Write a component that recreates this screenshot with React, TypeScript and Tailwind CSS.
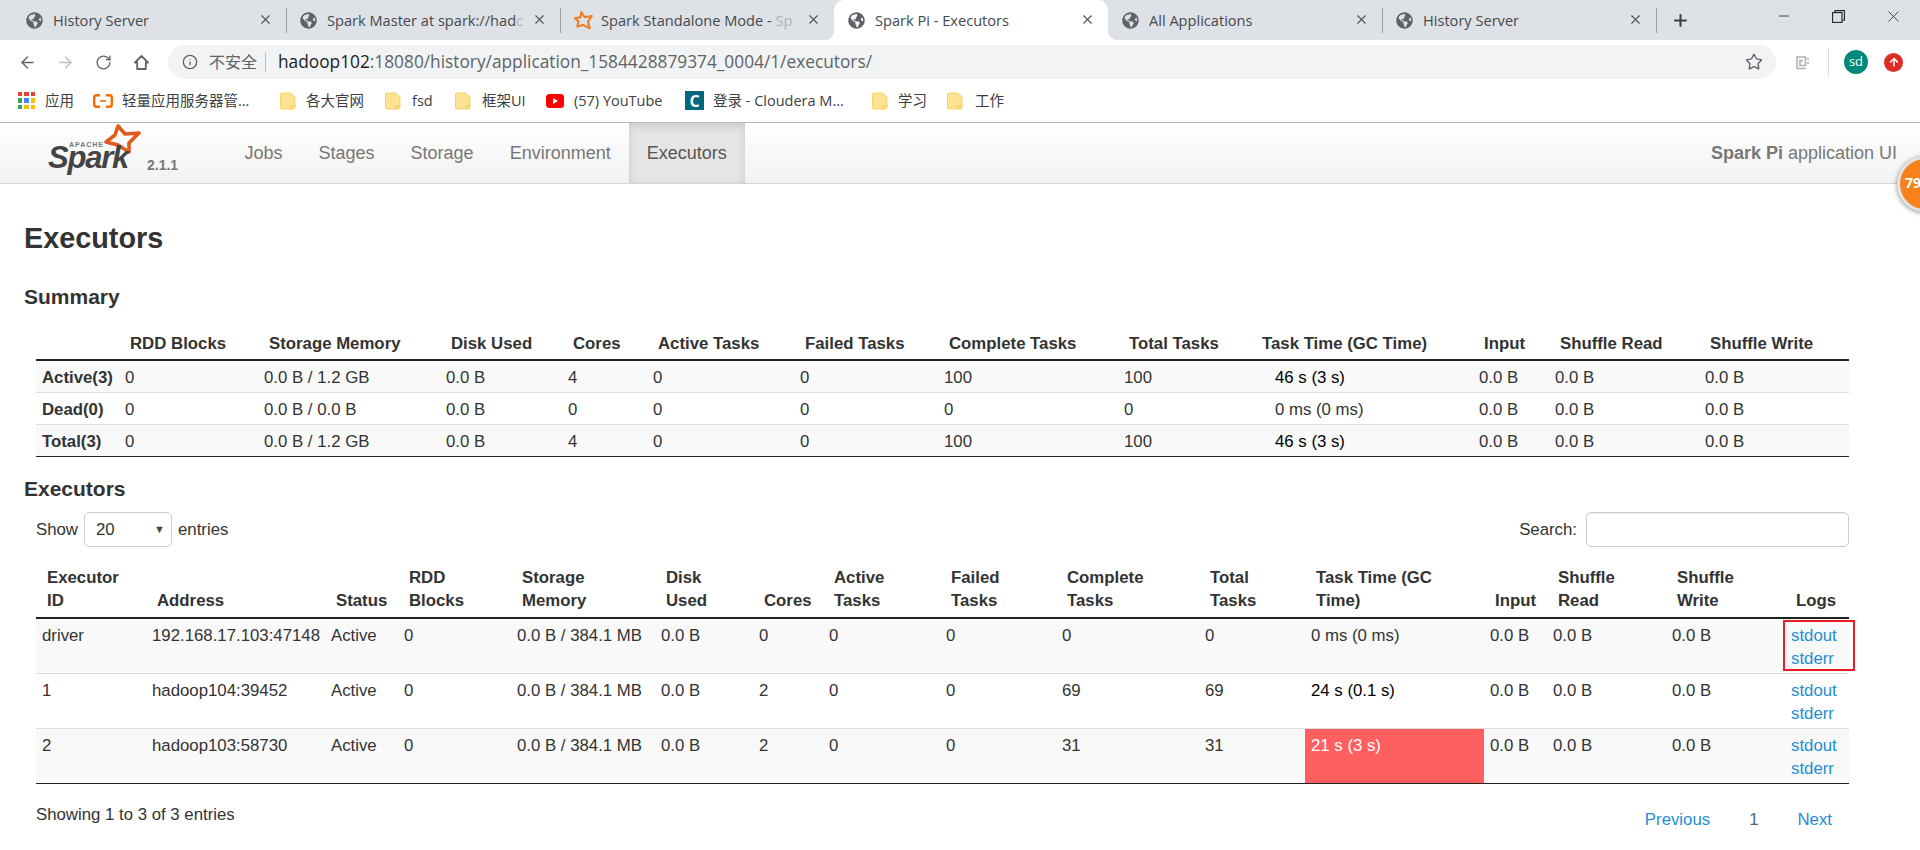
import { ArrowLeft, ArrowRight, RotateCw, Info, Star, X, Plus, Minus } from "lucide-react";
import { FaGlobeAmericas, FaArrowUp } from "react-icons/fa";

const tabs = [
  { title: "History Server", icon: "globe", sep: true },
  { title: "Spark Master at spark://had", fade: "c", icon: "globe", sep: true },
  { title: "Spark Standalone Mode - ", fade: "Sp", icon: "star" },
  { title: "Spark Pi - Executors", icon: "globe", active: true },
  { title: "All Applications", icon: "globe", sep: true },
  { title: "History Server", icon: "globe", sep: true },
];

const summaryRows = [
  ["Active(3)", "0", "0.0 B / 1.2 GB", "0.0 B", "4", "0", "0", "100", "100", "46 s (3 s)", "0.0 B", "0.0 B", "0.0 B"],
  ["Dead(0)", "0", "0.0 B / 0.0 B", "0.0 B", "0", "0", "0", "0", "0", "0 ms (0 ms)", "0.0 B", "0.0 B", "0.0 B"],
  ["Total(3)", "0", "0.0 B / 1.2 GB", "0.0 B", "4", "0", "0", "100", "100", "46 s (3 s)", "0.0 B", "0.0 B", "0.0 B"],
];

const summaryHead = ["", "RDD Blocks", "Storage Memory", "Disk Used", "Cores", "Active Tasks", "Failed Tasks", "Complete Tasks", "Total Tasks", "Task Time (GC Time)", "Input", "Shuffle Read", "Shuffle Write"];

const execHead = ["Executor ID", "Address", "Status", "RDD Blocks", "Storage Memory", "Disk Used", "Cores", "Active Tasks", "Failed Tasks", "Complete Tasks", "Total Tasks", "Task Time (GC Time)", "Input", "Shuffle Read", "Shuffle Write", "Logs"];

const execRows = [
  ["driver", "192.168.17.103:47148", "Active", "0", "0.0 B / 384.1 MB", "0.0 B", "0", "0", "0", "0", "0", "0 ms (0 ms)", "0.0 B", "0.0 B", "0.0 B"],
  ["1", "hadoop104:39452", "Active", "0", "0.0 B / 384.1 MB", "0.0 B", "2", "0", "0", "69", "69", "24 s (0.1 s)", "0.0 B", "0.0 B", "0.0 B"],
  ["2", "hadoop103:58730", "Active", "0", "0.0 B / 384.1 MB", "0.0 B", "2", "0", "0", "31", "31", "21 s (3 s)", "0.0 B", "0.0 B", "0.0 B"],
];

const Folder = () => (
  <svg width="16" height="18" viewBox="0 0 16 18" className="shrink-0">
    <path d="M1.5 1h9L15 5v10.5a1.5 1.5 0 0 1-1.5 1.5h-12A1 1 0 0 1 .5 16V2a1 1 0 0 1 1-1z" fill="#fde293" stroke="#f6d365" />
    <path d="M11 17v-3h4" fill="none" stroke="#f0c84b" />
  </svg>
);

const SparkStar = ({ size = 20 }: { size?: number }) => (
  <svg width={size} height={size} viewBox="0 0 34 34" className="-mr-[2px] shrink-0">
    <path d="M13 2l6 9 13-2-7 10 3 12-12-6-10 3 2-10L1 13l11-2z" fill="none" stroke="#ef7b22" strokeWidth="3.6" strokeLinejoin="round" />
  </svg>
);

function ChromeTabs() {
  return (
    <div className="flex h-[40px] bg-[#dee1e6] pl-[12px]">
      {tabs.map((t, i) => (
        <div
          key={i}
          className={
            t.active
              ? "relative flex h-[40px] w-[274px] items-center rounded-t-[10px] bg-white pl-[14px]"
              : "relative flex h-[40px] w-[274px] items-center pl-[14px]"
          }
        >
          {t.active && (
            <>
              <span className="absolute -left-[10px] bottom-0 h-[10px] w-[10px] bg-[radial-gradient(circle_at_0_0,#dee1e6_10px,#ffffff_10.5px)]" />
              <span className="absolute -right-[10px] bottom-0 h-[10px] w-[10px] bg-[radial-gradient(circle_at_100%_0,#dee1e6_10px,#ffffff_10.5px)]" />
            </>
          )}
          {t.icon === "globe" ? <FaGlobeAmericas size={17} className="shrink-0 text-[#5f6368]" /> : <SparkStar size={19} />}
          <span className="ml-[10px] w-[201px] overflow-hidden whitespace-nowrap pt-[1px] text-[14.6px] text-[#45494e]">
            {t.title}
            {t.fade && <span className="text-[#b0b3b8]">{t.fade}</span>}
          </span>
          <X size={15} strokeWidth={1.8} className="absolute left-[246px] top-[12px] text-[#50545a]" />
          {t.sep && <span className="absolute right-[-1px] top-[8px] h-[25px] w-px bg-[#9aa0a6]" />}
        </div>
      ))}
      <div className="flex w-[48px] items-center justify-center">
        <Plus size={19} strokeWidth={2.6} className="text-[#3c4043]" />
      </div>
      <div className="ml-auto flex text-[#202124]">
        <div className="flex h-[32px] w-[55px] items-center justify-center">
          <Minus size={16} strokeWidth={1.2} />
        </div>
        <div className="flex h-[32px] w-[55px] items-center justify-center">
          <svg width="13" height="13" viewBox="0 0 13 13" fill="none" stroke="#202124" strokeWidth="1.1">
            <rect x="0.6" y="2.6" width="9.4" height="9.8" />
            <path d="M3 2.6V.6h9.4v9.6H10" />
          </svg>
        </div>
        <div className="flex h-[32px] w-[54px] items-center justify-center">
          <X size={19} strokeWidth={1} />
        </div>
      </div>
    </div>
  );
}

function Toolbar() {
  return (
    <div className="flex h-[39px] items-start bg-white pt-[5px] pl-[8px]">
      <div className="flex h-[34px] w-[38px] items-center justify-center text-[#5f6368]"><ArrowLeft size={19} strokeWidth={1.7} /></div>
      <div className="flex h-[34px] w-[38px] items-center justify-center text-[#bdc1c6]"><ArrowRight size={19} strokeWidth={1.7} /></div>
      <div className="flex h-[34px] w-[38px] items-center justify-center text-[#5f6368]"><RotateCw size={17} strokeWidth={1.9} /></div>
      <div className="flex h-[34px] w-[38px] items-center justify-center">
        <svg width="17" height="17" viewBox="0 0 17 17" fill="none" stroke="#5f6368" strokeWidth="1.8">
          <path d="M8.5 2L2 8.5h2.2V15h8.6V8.5H15z" strokeLinejoin="round" />
        </svg>
      </div>
      <div className="ml-[8px] flex h-[34px] w-[1608px] items-center rounded-full bg-[#f1f3f4] pl-[14px] pr-[12px]">
        <Info size={16} strokeWidth={2} className="text-[#5f6368]" />
        <span className="ml-[11px] text-[16px] text-[#5f6368]">不安全</span>
        <span className="ml-[8px] h-[20px] w-px bg-[#bdc1c6]" />
        <span className="ml-[12px] text-[17.3px] text-[#5f6368]">
          <span className="text-[#202124]">hadoop102</span>:18080/history/application_1584428879374_0004/1/executors/
        </span>
        <Star size={18} strokeWidth={1.9} className="ml-auto mr-[1px] text-[#5f6368]" />
      </div>
      <div className="flex h-[34px] w-[52px] items-center justify-center">
        <svg width="15" height="15" viewBox="0 0 15 15" fill="none" stroke="#aeb0b3" strokeWidth="1.6">
          <path d="M10.5 13.5H2V2h8.5v8.5H5V5.5h3" />
          <path d="M13 3v2M13 7v2" />
        </svg>
      </div>
      <span className="mt-[3px] h-[28px] w-px bg-[#dadce0]" />
      <div className="ml-[15px] mt-[5px] flex h-[24px] w-[24px] items-center justify-center rounded-full bg-[#00897b] text-[13px] text-white">sd</div>
      <div className="ml-[16px] mt-[7.5px] flex h-[19px] w-[19px] items-center justify-center rounded-full bg-[#dd2c23] text-white">
        <FaArrowUp size={10} />
      </div>
    </div>
  );
}

function Bookmarks() {
  const label = "whitespace-nowrap text-[14.5px] text-[#3c4043]";
  return (
    <div className="flex h-[44px] items-center border-b border-[#b8b8b8] bg-white pl-[18px]">
      <div className="grid h-[17px] w-[17px] shrink-0 grid-cols-3 gap-[2px]">
        <i className="bg-[#ea4335]" /><i className="bg-[#ea4335]" /><i className="bg-[#ea4335]" />
        <i className="bg-[#34a853]" /><i className="bg-[#4285f4]" /><i className="bg-[#fbbc05]" />
        <i className="bg-[#34a853]" /><i className="bg-[#fbbc05]" /><i className="bg-[#fbbc05]" />
      </div>
      <span className={"ml-[10px] w-[48px] " + label}>应用</span>
      <svg width="20" height="14" viewBox="0 0 20 14" fill="none" className="shrink-0">
        <path d="M7 1.2H3.5A2.3 2.3 0 0 0 1.2 3.5v7a2.3 2.3 0 0 0 2.3 2.3H7M13 1.2h3.5a2.3 2.3 0 0 1 2.3 2.3v7a2.3 2.3 0 0 1-2.3 2.3H13" stroke="#ff6a00" strokeWidth="2.4" />
        <path d="M7 7h6" stroke="#ff6a00" strokeWidth="1.6" />
      </svg>
      <span className={"ml-[9px] w-[158px] " + label}>轻量应用服务器管...</span>
      <Folder />
      <span className={"ml-[10px] w-[79px] " + label}>各大官网</span>
      <Folder />
      <span className={"ml-[11px] w-[43px] " + label}>fsd</span>
      <Folder />
      <span className={"ml-[11px] w-[64px] " + label}>框架UI</span>
      <svg width="18" height="14" viewBox="0 0 18 14" className="shrink-0">
        <rect width="18" height="14" rx="3.5" fill="#f00" />
        <path d="M7 4l5 3-5 3z" fill="#fff" />
      </svg>
      <span className={"ml-[10px] w-[111px] " + label}>(57) YouTube</span>
      <div className="flex h-[19px] w-[19px] shrink-0 items-center justify-center bg-[#00677f] text-[16px] font-bold text-white">C</div>
      <span className={"ml-[9px] w-[159px] " + label}>登录 - Cloudera M...</span>
      <Folder />
      <span className={"ml-[10px] w-[49px] " + label}>学习</span>
      <Folder />
      <span className={"ml-[12px] " + label}>工作</span>
    </div>
  );
}

function SparkNav() {
  return (
    <div className="flex h-[61px] border-b border-[#d4d4d4] bg-gradient-to-b from-white to-[#f2f2f2] pl-[44px] font-['Liberation_Sans',sans-serif] text-[18px] text-[#777]">
      <svg width="103" height="60" viewBox="0 0 103 60" className="shrink-0">
        <path d="M74 3l7 8 14-1-10 10v9l-11-7-12-3 9-7z" fill="none" stroke="#e25a1c" strokeWidth="3.6" strokeLinejoin="round" />
        <text x="25" y="24" fontSize="7" fontWeight="700" fill="#777" letterSpacing="1">APACHE</text>
        <text x="4" y="45" fontSize="31" fontWeight="700" fontStyle="italic" fill="#444" letterSpacing="-1.2">Spark</text>
      </svg>
      <span className="mt-[34px] w-[36px] text-[14px] font-bold leading-[16px] text-[#777]">2.1.1</span>
      <div className="ml-[43.5px] flex">
        <a className="flex items-center px-[18px]">Jobs</a>
        <a className="flex items-center px-[18px]">Stages</a>
        <a className="flex items-center px-[18px]">Storage</a>
        <a className="flex items-center px-[18px]">Environment</a>
        <a className="flex w-[116px] items-center justify-center bg-[#e5e5e5] text-[#555] shadow-[inset_0_3px_8px_rgba(0,0,0,0.125)]">Executors</a>
      </div>
      <p className="ml-auto self-center pr-[23px]">
        <strong>Spark Pi</strong> application UI
      </p>
    </div>
  );
}

export default function App() {
  return (
    <div className="relative h-[850px] w-[1920px] overflow-hidden bg-white font-['Open_Sans','Noto_Sans_CJK_SC',sans-serif]">
      <ChromeTabs />
      <Toolbar />
      <Bookmarks />
      <SparkNav />

      {/* notification bubble stuck to the right edge */}
      <div className="absolute left-[1897px] top-[156px] flex h-[56px] w-[56px] items-center rounded-full border-[3px] border-[#e3e3e3] bg-[#f7821b] pb-[4px] pl-[5px] text-[14px] font-bold text-white shadow-[0_1px_5px_rgba(0,0,0,0.45)]">
        79
      </div>

      <div className="pl-[24px] font-['Liberation_Sans','Noto_Sans_CJK_SC',sans-serif] text-[16.8px] leading-[23px] text-[#333]">
        <h3 className="mt-[38px] text-[28.8px] font-bold leading-[32px]">Executors</h3>
        <h4 className="mt-[31px] text-[21px] font-bold leading-[24px]">Summary</h4>

        <table className="ml-[12px] mt-[23px] w-[1813px] table-fixed border-collapse">
          <colgroup>
            <col className="w-[83px]" />
            <col className="w-[139px]" />
            <col className="w-[182px]" />
            <col className="w-[122px]" />
            <col className="w-[85px]" />
            <col className="w-[147px]" />
            <col className="w-[144px]" />
            <col className="w-[180px]" />
            <col className="w-[151px]" />
            <col className="w-[204px]" />
            <col className="w-[76px]" />
            <col className="w-[150px]" />
            <col className="w-[150px]" />
          </colgroup>
          <thead>
            <tr className="border-b-2 border-[#222]">
              {summaryHead.map((h, i) => (
                <th key={i} className="whitespace-nowrap pb-[4px] pl-[11px] text-left align-bottom font-bold">
                  {i === 9 ? <span className="-ml-[18px]">{h}</span> : h}
                </th>
              ))}
            </tr>
          </thead>
          <tbody className="border-b border-[#222]">
            {summaryRows.map((r, i) => (
              <tr key={i} className={i === 1 ? "border-t border-[#ddd] bg-white" : "border-t border-[#ddd] bg-[#f9f9f9]"}>
                {r.map((c, j) => (
                  <td
                    key={j}
                    className={
                      j === 0
                        ? "whitespace-nowrap pb-[3px] pl-[6px] pt-[5px] font-bold"
                        : j === 9 && i !== 1
                          ? "whitespace-nowrap pb-[3px] pl-[6px] pt-[5px] text-black"
                          : "whitespace-nowrap pb-[3px] pl-[6px] pt-[5px]"
                    }
                  >
                    {c}
                  </td>
                ))}
              </tr>
            ))}
          </tbody>
        </table>

        <h4 className="mt-[20px] text-[21px] font-bold leading-[24px]">Executors</h4>

        <div className="ml-[12px] mt-[11px] flex w-[1813px] items-center">
          <span>Show</span>
          <div className="ml-[6px] flex h-[35px] w-[88px] items-center justify-between rounded-[5px] border border-[#ccc] pl-[11px] pr-[6px]">
            <span>20</span>
            <span className="text-[11px] text-[#444]">▼</span>
          </div>
          <span className="ml-[6px]">entries</span>
          <span className="ml-auto">Search:</span>
          <div className="ml-[9px] h-[35px] w-[263px] rounded-[5px] border border-[#ccc] shadow-[inset_0_1px_1px_rgba(0,0,0,0.075)]" />
        </div>

        <table className="ml-[12px] mt-[19px] w-[1813px] table-fixed border-collapse">
          <colgroup>
            <col className="w-[110px]" />
            <col className="w-[179px]" />
            <col className="w-[73px]" />
            <col className="w-[113px]" />
            <col className="w-[144px]" />
            <col className="w-[98px]" />
            <col className="w-[70px]" />
            <col className="w-[117px]" />
            <col className="w-[116px]" />
            <col className="w-[143px]" />
            <col className="w-[106px]" />
            <col className="w-[179px]" />
            <col className="w-[63px]" />
            <col className="w-[119px]" />
            <col className="w-[119px]" />
            <col className="w-[64px]" />
          </colgroup>
          <thead>
            <tr className="border-b-2 border-[#222]">
              {execHead.map((h, i) => (
                <th key={i} className="pb-[5px] pl-[11px] pr-[8px] text-left align-bottom font-bold">{h}</th>
              ))}
            </tr>
          </thead>
          <tbody className="border-b border-[#222]">
            {execRows.map((r, i) => (
              <tr key={i} className={i === 1 ? "border-t border-[#ddd] bg-white" : "border-t border-[#ddd] bg-[#f9f9f9]"}>
                {r.map((c, j) => (
                  <td
                    key={j}
                    className={
                      j === 11 && i === 2
                        ? "whitespace-nowrap bg-[#ff5f5f] pb-[3px] pl-[6px] pt-[5px] align-top text-white"
                        : j === 11 && i === 1
                          ? "whitespace-nowrap pb-[3px] pl-[6px] pt-[5px] align-top text-black"
                          : "whitespace-nowrap pb-[3px] pl-[6px] pt-[5px] align-top"
                    }
                  >
                    {c}
                  </td>
                ))}
                <td className="relative pb-[3px] pl-[6px] pt-[5px] align-top text-[#1f8dd6]">
                  <div>stdout</div>
                  <div>stderr</div>
                  {i === 0 && <div className="absolute -right-[6px] -left-[2px] top-[1px] bottom-[2px] border-2 border-[#ec1c24]" />}
                </td>
              </tr>
            ))}
          </tbody>
        </table>

        <div className="ml-[12px] mt-[19px] flex w-[1813px] items-start justify-between">
          <span>Showing 1 to 3 of 3 entries</span>
          <div className="flex pr-[17px] pt-[5px] text-[#1f8dd6]">
            <span>Previous</span>
            <span className="ml-[39px] text-[#4a6a80]">1</span>
            <span className="ml-[39px]">Next</span>
          </div>
        </div>
      </div>
    </div>
  );
}
